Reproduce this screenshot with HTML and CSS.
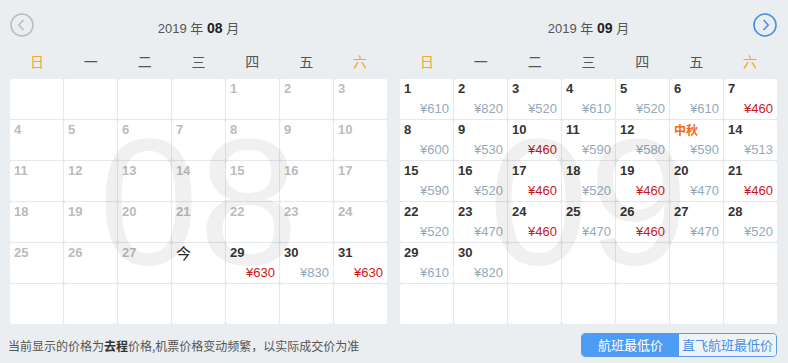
FILE: index.html
```html
<!DOCTYPE html>
<html lang="zh-CN">
<head>
  <meta charset="UTF-8" />
  <title>低价日历</title>
  <link rel="stylesheet" href="styles.css">
</head>
<body>
  <div class="months">
    <div class="month">
      <div class="month-head">
        <span class="arrow arrow-prev">
          <svg width="24" height="24" viewBox="0 0 24 24"><circle cx="12" cy="12" r="11" fill="none" stroke="#bdbdbd" stroke-width="1.6"/><path d="M13.5 7 L8.8 12 L13.5 17" fill="none" stroke="#bdbdbd" stroke-width="1.6"/></svg>
        </span>
        <div class="month-title">2019 年 <b>08</b> 月</div>
        <span></span>
      </div>
      <div class="weekdays">
        <span class="we">日</span><span>一</span><span>二</span><span>三</span><span>四</span><span>五</span><span class="we">六</span>
      </div>
      <div class="grid">
        <div class="cell"></div><div class="cell"></div><div class="cell"></div><div class="cell"></div>
        <div class="cell past"><span class="num">1</span></div>
        <div class="cell past"><span class="num">2</span></div>
        <div class="cell past"><span class="num">3</span></div>
        <div class="cell past"><span class="num">4</span></div>
        <div class="cell past"><span class="num">5</span></div>
        <div class="cell past"><span class="num">6</span></div>
        <div class="cell past"><span class="num">7</span></div>
        <div class="cell past"><span class="num">8</span></div>
        <div class="cell past"><span class="num">9</span></div>
        <div class="cell past"><span class="num">10</span></div>
        <div class="cell past"><span class="num">11</span></div>
        <div class="cell past"><span class="num">12</span></div>
        <div class="cell past"><span class="num">13</span></div>
        <div class="cell past"><span class="num">14</span></div>
        <div class="cell past"><span class="num">15</span></div>
        <div class="cell past"><span class="num">16</span></div>
        <div class="cell past"><span class="num">17</span></div>
        <div class="cell past"><span class="num">18</span></div>
        <div class="cell past"><span class="num">19</span></div>
        <div class="cell past"><span class="num">20</span></div>
        <div class="cell past"><span class="num">21</span></div>
        <div class="cell past"><span class="num">22</span></div>
        <div class="cell past"><span class="num">23</span></div>
        <div class="cell past"><span class="num">24</span></div>
        <div class="cell past"><span class="num">25</span></div>
        <div class="cell past"><span class="num">26</span></div>
        <div class="cell past"><span class="num">27</span></div>
        <div class="cell"><span class="today">今</span></div>
        <div class="cell"><span class="num">29</span><span class="price low">¥630</span></div>
        <div class="cell"><span class="num">30</span><span class="price">¥830</span></div>
        <div class="cell"><span class="num">31</span><span class="price low">¥630</span></div>
        <div class="cell"></div><div class="cell"></div><div class="cell"></div><div class="cell"></div>
        <div class="cell"></div><div class="cell"></div><div class="cell"></div>
        <div class="watermark">08</div>
      </div>
    </div>

    <div class="month">
      <div class="month-head">
        <span></span>
        <div class="month-title">2019 年 <b>09</b> 月</div>
        <span class="arrow arrow-next">
          <svg width="24" height="24" viewBox="0 0 24 24"><circle cx="12" cy="12" r="11" fill="none" stroke="#4a90e2" stroke-width="1.6"/><path d="M10.5 7 L15.2 12 L10.5 17" fill="none" stroke="#4a90e2" stroke-width="1.6"/></svg>
        </span>
      </div>
      <div class="weekdays">
        <span class="we">日</span><span>一</span><span>二</span><span>三</span><span>四</span><span>五</span><span class="we">六</span>
      </div>
      <div class="grid">
        <div class="cell"><span class="num">1</span><span class="price">¥610</span></div>
        <div class="cell"><span class="num">2</span><span class="price">¥820</span></div>
        <div class="cell"><span class="num">3</span><span class="price">¥520</span></div>
        <div class="cell"><span class="num">4</span><span class="price">¥610</span></div>
        <div class="cell"><span class="num">5</span><span class="price">¥520</span></div>
        <div class="cell"><span class="num">6</span><span class="price">¥610</span></div>
        <div class="cell"><span class="num">7</span><span class="price low">¥460</span></div>
        <div class="cell"><span class="num">8</span><span class="price">¥600</span></div>
        <div class="cell"><span class="num">9</span><span class="price">¥530</span></div>
        <div class="cell"><span class="num">10</span><span class="price low">¥460</span></div>
        <div class="cell"><span class="num">11</span><span class="price">¥590</span></div>
        <div class="cell"><span class="num">12</span><span class="price">¥580</span></div>
        <div class="cell"><span class="num holiday">中秋</span><span class="price">¥590</span></div>
        <div class="cell"><span class="num">14</span><span class="price">¥513</span></div>
        <div class="cell"><span class="num">15</span><span class="price">¥590</span></div>
        <div class="cell"><span class="num">16</span><span class="price">¥520</span></div>
        <div class="cell"><span class="num">17</span><span class="price low">¥460</span></div>
        <div class="cell"><span class="num">18</span><span class="price">¥520</span></div>
        <div class="cell"><span class="num">19</span><span class="price low">¥460</span></div>
        <div class="cell"><span class="num">20</span><span class="price">¥470</span></div>
        <div class="cell"><span class="num">21</span><span class="price low">¥460</span></div>
        <div class="cell"><span class="num">22</span><span class="price">¥520</span></div>
        <div class="cell"><span class="num">23</span><span class="price">¥470</span></div>
        <div class="cell"><span class="num">24</span><span class="price low">¥460</span></div>
        <div class="cell"><span class="num">25</span><span class="price">¥470</span></div>
        <div class="cell"><span class="num">26</span><span class="price low">¥460</span></div>
        <div class="cell"><span class="num">27</span><span class="price">¥470</span></div>
        <div class="cell"><span class="num">28</span><span class="price">¥520</span></div>
        <div class="cell"><span class="num">29</span><span class="price">¥610</span></div>
        <div class="cell"><span class="num">30</span><span class="price">¥820</span></div>
        <div class="cell"></div><div class="cell"></div><div class="cell"></div><div class="cell"></div>
        <div class="cell"></div><div class="cell"></div><div class="cell"></div><div class="cell"></div>
        <div class="cell"></div><div class="cell"></div><div class="cell"></div><div class="cell"></div>
        <div class="watermark">09</div>
      </div>
    </div>
  </div>

  <div class="footer">
    <div class="note">当前显示的价格为<b>去程</b>价格,机票价格变动频繁，以实际成交价为准</div>
    <div class="switch">
      <span class="switch-btn active">航班最低价</span>
      <span class="switch-btn">直飞航班最低价</span>
    </div>
  </div>
</body>
</html>
```

FILE: styles.css
```css
body {
  margin: 0;
  background-color: #eaeef0;
  font-family: "Liberation Sans", "Noto Sans CJK SC", sans-serif;
  color: #333;
}
.months {
  display: flex;
  gap: 13px;
  padding: 0 11px 0 10px;
}
.month {
  width: 377px;
}
.month-head {
  display: grid;
  grid-template-columns: 24px 1fr 24px;
  align-items: start;
}
.arrow {
  margin-top: 13px;
  height: 24px;
}
.arrow svg {
  display: block;
}
.month-title {
  padding-top: 16px;
  line-height: 24px;
  text-align: center;
  font-size: 13px;
  color: #555;
}
.month-title b {
  color: #222;
  font-size: 14px;
}
.weekdays {
  display: grid;
  grid-template-columns: repeat(7, 1fr);
  margin-top: 8px;
  line-height: 24px;
  font-size: 14px;
  color: #555;
  text-align: center;
  font-family: "Noto Sans CJK SC", sans-serif;
}
.weekdays .we {
  color: #f5a623;
}
.grid {
  position: relative;
  display: grid;
  grid-template-columns: repeat(7, 53px);
  grid-auto-rows: 40px;
  gap: 1px;
  margin-top: 6px;
  background-color: #e6e9eb;
  overflow: hidden;
}
.cell {
  display: flex;
  flex-direction: column;
  justify-content: space-between;
  padding: 2px 4px;
  background-color: #fff;
  border-radius: 2px;
}
.num {
  font-size: 13px;
  line-height: 16px;
  font-weight: bold;
  color: #333;
}
.past .num {
  color: #bbb;
}
.holiday {
  color: #f06a0f;
  font-family: "Noto Sans CJK SC", sans-serif;
  font-size: 12px;
}
.today {
  font-size: 15px;
  line-height: 16px;
  color: #222;
  font-family: "Noto Sans CJK SC", sans-serif;
}
.price {
  font-size: 13px;
  line-height: 16px;
  text-align: right;
  color: #94a9ba;
}
.price.low {
  color: #c8161d;
}
.watermark {
  position: absolute;
  left: 0;
  right: 0;
  top: 50%;
  transform: translateY(-50%);
  text-align: center;
  font-size: 180px;
  line-height: 1;
  color: rgba(0, 0, 0, 0.06);
  pointer-events: none;
}
.footer {
  display: flex;
  justify-content: space-between;
  align-items: center;
  margin-top: 9px;
  padding: 0 11px 0 8px;
}
.note {
  font-size: 12px;
  color: #555;
  font-family: "Noto Sans CJK SC", sans-serif;
}
.note b {
  color: #333;
}
.switch {
  display: flex;
  border: 1px solid #5a9be6;
  border-radius: 4px;
  overflow: hidden;
}
.switch-btn {
  width: 97px;
  height: 22px;
  line-height: 22px;
  text-align: center;
  font-size: 13px;
  color: #4a90e2;
  background-color: #eef3f8;
  font-family: "Noto Sans CJK SC", sans-serif;
}
.switch-btn.active {
  color: #fff;
  background-color: #4d9cf3;
}
```
